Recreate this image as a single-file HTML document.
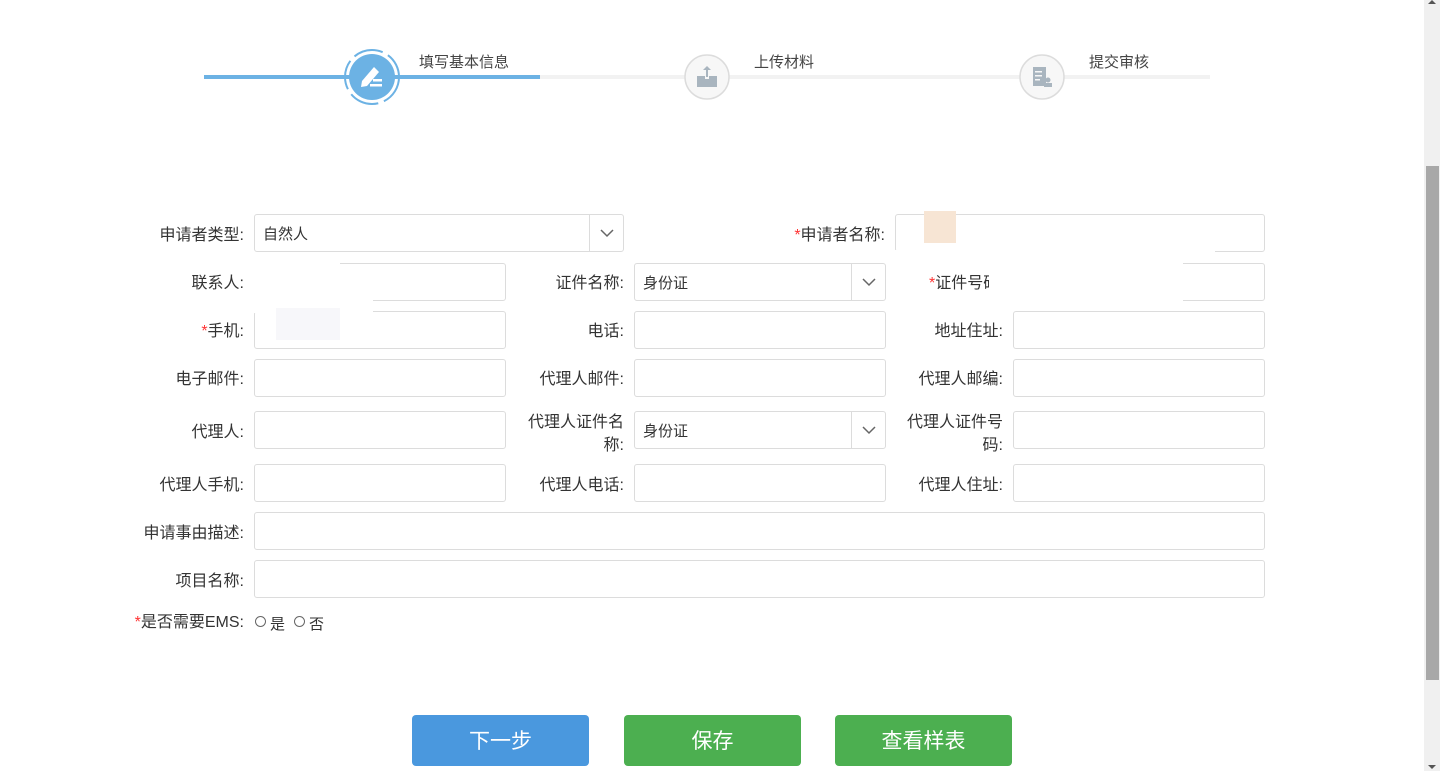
<!DOCTYPE html>
<html><head><meta charset="utf-8"><style>
*{margin:0;padding:0;box-sizing:border-box}
body{width:1440px;height:771px;overflow:hidden;background:#fff;font-family:"Liberation Sans","Noto Sans CJK SC",sans-serif;color:#333;position:relative}
.a{position:absolute}
.inp{position:absolute;border:1px solid #dcdcdc;border-radius:3px;background:#fff;height:38px}
.lb{position:absolute;font-size:16px;text-align:right;line-height:20px;margin-top:2px}
.r{color:#f33}
.sel{font-size:15px;line-height:39px;padding-left:8px}
.arr{position:absolute;right:0;top:0;width:34px;height:36px;border-left:1px solid #dcdcdc}
.btn{position:absolute;top:715px;height:51px;width:177px;border-radius:4px;color:#fff;font-size:21px;text-align:center;line-height:53px}
.rd{position:absolute;width:11px;height:11px;border:1px solid #666;border-radius:50%}
</style></head><body>
<!-- stepper -->
<div class="a" style="left:204px;top:75px;width:336px;height:4px;background:#6cb2e4"></div>
<div class="a" style="left:540px;top:75px;width:670px;height:4px;background:#f2f2f2"></div>
<svg class="a" style="left:342px;top:47px" width="60" height="60" viewBox="0 0 60 60">
<circle cx="30" cy="30" r="27" fill="none" stroke="#6cb2e4" stroke-width="2" stroke-dasharray="30 6"/>
<circle cx="30" cy="30" r="23" fill="#6cb2e4"/>
<path d="M19 40 L20 34 L32 20 L37 25 L25 39 Z" fill="#fff"/>
<rect x="28" y="37" width="12" height="2.5" fill="#fff"/><rect x="31" y="32" width="9" height="2.5" fill="#fff"/>
</svg>
<svg class="a" style="left:684px;top:54px" width="46" height="46"><circle cx="23" cy="23" r="22" fill="#f7f7f7" stroke="#dcdcdc" stroke-width="1.5"/>
<path d="M13 22h8v3h4v-3h8v11H13z" fill="#a9b5bf"/><path d="M23 12l-4 4h3v7h2v-7h3z" fill="#a9b5bf"/></svg>
<svg class="a" style="left:1019px;top:54px" width="46" height="46"><circle cx="23" cy="23" r="22" fill="#f7f7f7" stroke="#dcdcdc" stroke-width="1.5"/>
<rect x="14" y="13" width="13" height="19" fill="#a9b5bf"/><rect x="16" y="17" width="7" height="1.5" fill="#f7f7f7"/><rect x="16" y="21" width="7" height="1.5" fill="#f7f7f7"/><rect x="16" y="25" width="5" height="1.5" fill="#f7f7f7"/>
<circle cx="29" cy="26" r="2.5" fill="#a9b5bf"/><rect x="25" y="29" width="8" height="4" fill="#a9b5bf"/></svg>
<div class="a" style="left:419px;top:51px;font-size:15px;color:#444">填写基本信息</div>
<div class="a" style="left:754px;top:51px;font-size:15px;color:#444">上传材料</div>
<div class="a" style="left:1089px;top:51px;font-size:15px;color:#444">提交审核</div>

<!-- row1 -->
<div class="lb" style="right:1196px;top:224px">申请者类型:</div>
<div class="inp sel" style="left:254px;top:214px;width:370px">自然人<div class="arr"><svg width="34" height="36"><path d="M11 15l6 6 6-6" fill="none" stroke="#666" stroke-width="1.5"/></svg></div></div>
<div class="lb" style="right:555px;top:224px"><span class="r">*</span>申请者名称:</div>
<div class="inp" style="left:895px;top:214px;width:370px"></div>
<!-- row2 -->
<div class="lb" style="right:1196px;top:272px">联系人:</div>
<div class="inp" style="left:254px;top:263px;width:252px"></div>
<div class="lb" style="right:816px;top:272px">证件名称:</div>
<div class="inp sel" style="left:634px;top:263px;width:252px">身份证<div class="arr"><svg width="34" height="36"><path d="M11 15l6 6 6-6" fill="none" stroke="#666" stroke-width="1.5"/></svg></div></div>
<div class="inp" style="left:1013px;top:263px;width:252px"></div>
<div class="a" style="left:895px;top:250px;width:320px;height:12px;background:#fff"></div>
<div class="a" style="left:895px;top:262px;width:288px;height:40px;background:#fff"></div>
<div class="lb" style="left:929px;top:272px;width:60px;text-align:left;overflow:hidden;white-space:nowrap"><span class="r">*</span>证件号码</div>
<div class="a" style="left:924px;top:211px;width:32px;height:32px;background:#f7e5d4"></div>
<!-- row3 -->
<div class="lb" style="right:1196px;top:320px"><span class="r">*</span>手机:</div>
<div class="inp" style="left:254px;top:311px;width:252px"></div>
<div class="a" style="left:254px;top:252px;width:86px;height:48px;background:#fff"></div>
<div class="a" style="left:254px;top:300px;width:119px;height:13px;background:#fff"></div>
<div class="a" style="left:276px;top:308px;width:64px;height:32px;background:#f7f7fa"></div>
<div class="lb" style="right:816px;top:320px">电话:</div>
<div class="inp" style="left:634px;top:311px;width:252px"></div>
<div class="lb" style="right:437px;top:320px">地址住址:</div>
<div class="inp" style="left:1013px;top:311px;width:252px"></div>
<!-- row4 -->
<div class="lb" style="right:1196px;top:368px">电子邮件:</div>
<div class="inp" style="left:254px;top:359px;width:252px"></div>
<div class="lb" style="right:816px;top:368px">代理人邮件:</div>
<div class="inp" style="left:634px;top:359px;width:252px"></div>
<div class="lb" style="right:437px;top:368px">代理人邮编:</div>
<div class="inp" style="left:1013px;top:359px;width:252px"></div>
<!-- row5 -->
<div class="lb" style="right:1196px;top:421px">代理人:</div>
<div class="inp" style="left:254px;top:411px;width:252px"></div>
<div class="lb" style="right:816px;top:409px;width:110px;line-height:23px">代理人证件名称:</div>
<div class="inp sel" style="left:634px;top:411px;width:252px">身份证<div class="arr"><svg width="34" height="36"><path d="M11 15l6 6 6-6" fill="none" stroke="#666" stroke-width="1.5"/></svg></div></div>
<div class="lb" style="right:437px;top:409px;width:110px;line-height:23px">代理人证件号码:</div>
<div class="inp" style="left:1013px;top:411px;width:252px"></div>
<!-- row6 -->
<div class="lb" style="right:1196px;top:474px">代理人手机:</div>
<div class="inp" style="left:254px;top:464px;width:252px"></div>
<div class="lb" style="right:816px;top:474px">代理人电话:</div>
<div class="inp" style="left:634px;top:464px;width:252px"></div>
<div class="lb" style="right:437px;top:474px">代理人住址:</div>
<div class="inp" style="left:1013px;top:464px;width:252px"></div>
<!-- row7,8 -->
<div class="lb" style="right:1196px;top:522px">申请事由描述:</div>
<div class="inp" style="left:254px;top:512px;width:1011px"></div>
<div class="lb" style="right:1196px;top:570px">项目名称:</div>
<div class="inp" style="left:254px;top:560px;width:1011px"></div>
<div class="lb" style="right:1196px;top:611px"><span class="r">*</span>是否需要EMS:</div>
<div class="rd" style="left:255px;top:616px"></div>
<div class="a" style="left:270px;top:613px;font-size:15px">是</div>
<div class="rd" style="left:294px;top:616px"></div>
<div class="a" style="left:309px;top:613px;font-size:15px">否</div>
<!-- buttons -->
<div class="btn" style="left:412px;background:#4a98de">下一步</div>
<div class="btn" style="left:624px;background:#4caf50">保存</div>
<div class="btn" style="left:835px;background:#4caf50">查看样表</div>
<!-- scrollbar -->
<div class="a" style="left:1424px;top:0;width:16px;height:771px;background:#f0f0f0"></div>
<div class="a" style="left:1426px;top:166px;width:13px;height:514px;background:#a8a8a8"></div>
<div class="a" style="left:1428px;top:0;width:0;height:0;border-left:4px solid transparent;border-right:4px solid transparent;border-bottom:4px solid #555"></div>
<div class="a" style="left:1428px;top:765px;width:0;height:0;border-left:4px solid transparent;border-right:4px solid transparent;border-top:4px solid #555"></div>
</body></html>
